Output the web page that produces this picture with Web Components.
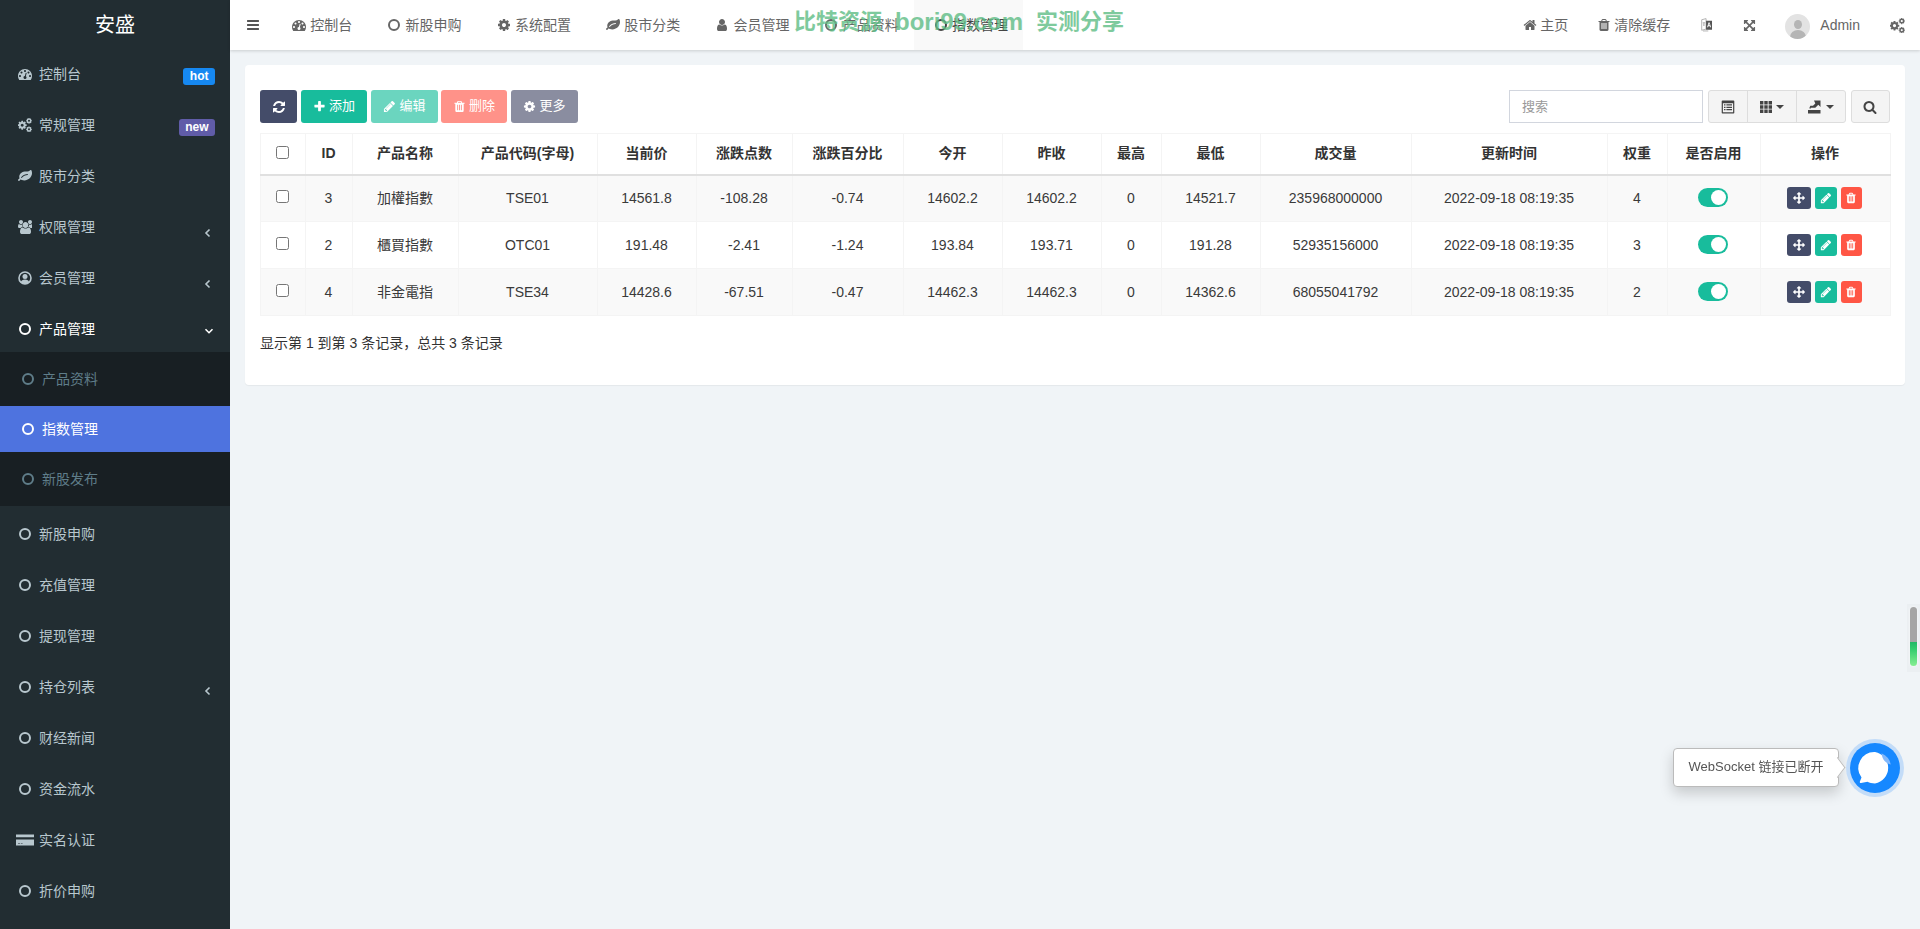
<!DOCTYPE html>
<html lang="zh-CN"><head><meta charset="utf-8"><title>安盛</title>
<style>
html,body{margin:0;height:100%;overflow:hidden;background:#f0f4f7;font:14px/1.42857 "Liberation Sans","Noto Sans CJK SC",sans-serif;color:#333}
body{display:flex}
main-col{flex:1;min-width:0}
</style></head><body>
<side-bar>
  <side-item icon="dashboard" badge="hot" badgecolor="#1688f1">控制台</side-item>
  <side-item icon="cogs" badge="new" badgecolor="#605ca8">常规管理</side-item>
  <side-item icon="leaf">股市分类</side-item>
  <side-item icon="users" arrow="left">权限管理</side-item>
  <side-item icon="usercircle" arrow="left">会员管理</side-item>
  <side-item icon="circle" arrow="down" kind="open">产品管理</side-item>
  <side-sub>
    <side-item icon="circle" kind="sub">产品资料</side-item>
    <side-item icon="circle" kind="cur">指数管理</side-item>
    <side-item icon="circle" kind="sub" style="height:53.6px">新股发布</side-item>
  </side-sub>
  <side-item icon="circle" kind="low">新股申购</side-item>
  <side-item icon="circle" kind="low">充值管理</side-item>
  <side-item icon="circle" kind="low">提现管理</side-item>
  <side-item icon="circle" kind="low" arrow="left">持仓列表</side-item>
  <side-item icon="circle" kind="low">财经新闻</side-item>
  <side-item icon="circle" kind="low">资金流水</side-item>
  <side-item icon="card" kind="low">实名认证</side-item>
  <side-item icon="circle" kind="low">折价申购</side-item>
</side-bar>
<main-col>
  <top-bar>
    <nav-tab icon="dashboard">控制台</nav-tab>
    <nav-tab icon="circle">新股申购</nav-tab>
    <nav-tab icon="cog">系统配置</nav-tab>
    <nav-tab icon="leaf">股市分类</nav-tab>
    <nav-tab icon="user">会员管理</nav-tab>
    <nav-tab icon="circle">产品资料</nav-tab>
    <nav-tab icon="circle" active>指数管理</nav-tab>
  </top-bar>
  <content-panel></content-panel>
</main-col>
<float-layer></float-layer>
<script>
const P={
bars:'M1664 1344v128q0 26-19 45t-45 19h-1408q-26 0-45-19t-19-45v-128q0-26 19-45t45-19h1408q26 0 45 19t19 45zm0-512v128q0 26-19 45t-45 19h-1408q-26 0-45-19t-19-45v-128q0-26 19-45t45-19h1408q26 0 45 19t19 45zm0-512v128q0 26-19 45t-45 19h-1408q-26 0-45-19t-19-45v-128q0-26 19-45t45-19h1408q26 0 45 19t19 45z',
plus:'M1600 736v192q0 40-28 68t-68 28h-416v416q0 40-28 68t-68 28h-192q-40 0-68-28t-28-68v-416h-416q-40 0-68-28t-28-68v-192q0-40 28-68t68-28h416v-416q0-40 28-68t68-28h192q40 0 68 28t28 68v416h416q40 0 68 28t28 68z',
pencil:'M491 1536l91-91-235-235-91 91v107h128v128h107zm523-928q0-22-22-22-10 0-17 7l-542 542q-7 7-7 17 0 22 22 22 10 0 17-7l542-542q7-7 7-17zm-54-192l416 416-832 832h-416v-416zm683 96q0 53-37 90l-166 166-416-416 166-165q36-38 90-38 53 0 91 38l235 234q37 39 37 91z',
trash:'M704 1376v-704q0-14-9-23t-23-9h-64q-14 0-23 9t-9 23v704q0 14 9 23t23 9h64q14 0 23-9t9-23zm256 0v-704q0-14-9-23t-23-9h-64q-14 0-23 9t-9 23v704q0 14 9 23t23 9h64q14 0 23-9t9-23zm256 0v-704q0-14-9-23t-23-9h-64q-14 0-23 9t-9 23v704q0 14 9 23t23 9h64q14 0 23-9t9-23zm-544-992h448l-48-117q-7-9-17-11h-317q-10 2-17 11zm928 32v64q0 14-9 23t-23 9h-96v948q0 83-47 143.5t-113 60.5h-832q-66 0-113-58.5t-47-141.5v-952h-96q-14 0-23-9t-9-23v-64q0-14 9-23t23-9h309l70-167q15-37 54-63t79-26h320q40 0 79 26t54 63l70 167h309q14 0 23 9t9 23z',
refresh:'M1639 1056q0 5-1 7-64 268-268 434.5t-478 166.5q-146 0-282.5-55t-243.5-157l-129 129q-19 19-45 19t-45-19-19-45v-448q0-26 19-45t45-19h448q26 0 45 19t19 45-19 45l-137 137q71 66 161 102t187 36q134 0 250-65t186-179q11-17 53-117 8-23 30-23h192q13 0 22.5 9.5t9.5 22.5zm25-800v448q0 26-19 45t-45 19h-448q-26 0-45-19t-19-45 19-45l138-138q-148-137-349-137-134 0-250 65t-186 179q-11 17-53 117-8 23-30 23h-199q-13 0-22.5-9.5t-9.5-22.5v-7q65-268 270-434.5t480-166.5q146 0 284 55.5t245 156.5l130-129q19-19 45-19t45 19 19 45z',
search:'M1216 832q0-185-131.5-316.5t-316.5-131.5-316.5 131.5-131.5 316.5 131.5 316.5 316.5 131.5 316.5-131.5 131.5-316.5zm512 832q0 52-38 90t-90 38q-54 0-90-38l-343-342q-179 124-399 124-143 0-273.5-55.5t-225-150-150-225-55.5-273.5 55.5-273.5 150-225 225-150 273.5-55.5 273.5 55.5 225 150 150 225 55.5 273.5q0 220-124 399l343 343q37 37 37 90z',
home:'M1472 992v480q0 26-19 45t-45 19h-384v-384h-256v384h-384q-26 0-45-19t-19-45v-480q0-1 .5-3t.5-3l575-474 575 474q1 2 1 6zm223-69l-62 74q-8 9-21 11h-3q-13 0-21-7l-692-577-692 577q-12 8-24 7-13-2-21-11l-62-74q-8-10-7-23.5t11-21.5l719-599q32-26 76-26t76 26l244 204v-195q0-14 9-23t23-9h192q14 0 23 9t9 23v408l219 182q10 8 11 21.5t-7 23.5z',
user:'M1536 1399q0 109-62.5 187t-150.5 78h-854q-88 0-150.5-78t-62.5-187q0-85 8.5-160.5t31.5-152 58.5-131 94-89 134.5-34.5q131 128 313 128t313-128q76 0 134.5 34.5t94 89 58.5 131 31.5 152 8.5 160.5zm-256-887q0 159-112.5 271.5t-271.5 112.5-271.5-112.5-112.5-271.5 112.5-271.5 271.5-112.5 271.5 112.5 112.5 271.5z',
cog:'M1152 896q0-106-75-181t-181-75-181 75-75 181 75 181 181 75 181-75 75-181zm512-109v222q0 12-8 23t-20 13l-185 28q-19 54-39 91 35 50 107 138 10 12 10 25t-9 23q-27 37-99 108t-94 71q-12 0-26-9l-138-108q-44 23-91 38-16 136-29 186-7 28-36 28h-222q-14 0-24.5-8.5t-11.5-21.5l-28-184q-49-16-90-37l-141 107q-10 9-25 9-14 0-25-11-126-114-165-168-7-10-7-23 0-12 8-23 15-21 51-66.5t54-70.5q-27-50-41-99l-183-27q-13-2-21-12.5t-8-23.5v-222q0-12 8-23t19-13l186-28q14-46 39-92-40-57-107-138-10-12-10-24 0-10 9-23 26-36 98.5-107.5t94.5-71.5q13 0 26 10l138 107q44-23 91-38 16-136 29-186 7-28 36-28h222q14 0 24.5 8.5t11.5 21.5l28 184q49 16 90 37l142-107q9-9 24-9 13 0 25 10 129 119 165 170 7 8 7 22 0 12-8 23-15 21-51 66.5t-54 70.5q26 50 41 98l183 28q13 2 21 12.5t8 23.5z',
leaf:'M1280 704q0-26-19-45t-45-19q-172 0-318 49.5t-259.5 134-235.5 219.5q-19 21-19 45 0 26 19 45t45 19q24 0 45-19 27-24 74-71t67-66q137-124 268.5-176t313.5-52q26 0 45-19t19-45zm512-198q0 95-20 193-46 224-184.5 383t-357.5 268q-214 108-438 108-148 0-286-47-15-5-88-42t-96-37q-16 0-39.5 32t-45 70-52.5 70-60 32q-43 0-63.5-17.5t-45.5-59.5q-2-4-6-11t-5.5-10-3-9.5-1.5-13.5q0-35 31-73.5t68-65.5 68-56 31-48q0-4-14-38t-16-44q-9-51-9-104 0-115 43.5-220t119-184.5 170.5-139 204-95.5q55-18 145-25.5t179.5-9 178.5-6 163.5-24 113.5-56.5l29.5-29.5 29.5-28 27-20 36.5-16 43.5-4.5q39 0 70.5 46t47.5 112 24 124 8 96z',
users:'M593 896q-162 5-265 128h-134q-82 0-138-40.5t-56-118.5q0-353 124-353 6 0 43.5 21t97.5 42.5 119 21.5q67 0 133-23-5 37-5 66 0 139 81 256zm1071 637q0 120-73 189.5t-194 69.5h-874q-121 0-194-69.5t-73-189.5q0-53 3.5-103.5t14-109 26.5-108.5 43-97.5 62-81 85.5-53.5 111.5-20q10 0 43 21.5t73 48 107 48 135 21.5 135-21.5 107-48 73-48 43-21.5q61 0 111.5 20t85.5 53.5 62 81 43 97.5 26.5 108.5 14 109 3.5 103.5zm-1024-1277q0 106-75 181t-181 75-181-75-75-181 75-181 181-75 181 75 75 181zm704 384q0 159-112.5 271.5t-271.5 112.5-271.5-112.5-112.5-271.5 112.5-271.5 271.5-112.5 271.5 112.5 112.5 271.5zm576 225q0 78-56 118.5t-138 40.5h-134q-103-123-265-128 81-117 81-256 0-29-5-66 66 23 133 23 59 0 119-21.5t97.5-42.5 43.5-21q124 0 124 353zm-128-609q0 106-75 181t-181 75-181-75-75-181 75-181 181-75 181 75 75 181z',
dashboard:'M384 1152q0-53-37.5-90.5t-90.5-37.5-90.5 37.5-37.5 90.5 37.5 90.5 90.5 37.5 90.5-37.5 37.5-90.5zm192-448q0-53-37.5-90.5t-90.5-37.5-90.5 37.5-37.5 90.5 37.5 90.5 90.5 37.5 90.5-37.5 37.5-90.5zm428 481l101-382q6-26-7.5-48.5t-38.5-29.5-48 6.5-30 39.5l-101 382q-60 5-107 43.5t-63 98.5q-20 77 20 146t117 89 146-20 89-117q16-60-6-117t-72-91zm660-33q0-53-37.5-90.5t-90.5-37.5-90.5 37.5-37.5 90.5 37.5 90.5 90.5 37.5 90.5-37.5 37.5-90.5zm-640-640q0-53-37.5-90.5t-90.5-37.5-90.5 37.5-37.5 90.5 37.5 90.5 90.5 37.5 90.5-37.5 37.5-90.5zm448 192q0-53-37.5-90.5t-90.5-37.5-90.5 37.5-37.5 90.5 37.5 90.5 90.5 37.5 90.5-37.5 37.5-90.5zm320 448q0 261-141 483-19 29-54 29h-1402q-35 0-54-29-141-221-141-483 0-182 71-348t191-286 286-191 348-71 348 71 286 191 191 286 71 348z',
arrows:'M1792 896q0 26-19 45l-256 256q-19 19-45 19t-45-19-19-45v-128h-384v384h128q26 0 45 19t19 45-19 45l-256 256q-19 19-45 19t-45-19l-256-256q-19-19-19-45t19-45 45-19h128v-384h-384v128q0 26-19 45t-45 19-45-19l-256-256q-19-19-19-45t19-45l256-256q19-19 45-19t45 19 19 45v128h384v-384h-128q-26 0-45-19t-19-45 19-45l256-256q19-19 45-19t45 19l256 256q19 19 19 45t-19 45-45 19h-128v384h384v-128q0-26 19-45t45-19 45 19l256 256q19 19 19 45z',
expand:'M1411 541l-355 355 355 355 144-144q29-31 70-14 39 17 39 59v448q0 26-19 45t-45 19h-448q-42 0-59-40-17-39 14-69l144-144-355-355-355 355 144 144q31 30 14 69-17 40-59 40h-448q-26 0-45-19t-19-45v-448q0-42 40-59 39-17 69 14l144 144 355-355-355-355-144 144q-19 19-45 19-12 0-24-5-40-17-40-59v-448q0-26 19-45t45-19h448q42 0 59 40 17 39-14 69l-144 144 355 355 355-355-144-144q-31-30-14-69 17-40 59-40h448q26 0 45 19t19 45v448q0 42-39 59-13 5-25 5-26 0-45-19z'
};
const cogD=P.cog;
const SVG={
circle:'<svg viewBox="0 0 14 14"><circle cx="7" cy="7" r="5" fill="none" stroke="currentColor" stroke-width="2"/></svg>',
usercircle:'<svg viewBox="0 0 14 14"><circle cx="7" cy="7" r="6" fill="none" stroke="currentColor" stroke-width="1.6"/><circle cx="7" cy="5.6" r="2.5" fill="currentColor"/><path d="M2.8 11.4c.4-2 2-2.9 4.2-2.9s3.8.9 4.2 2.9c-1 1-2.5 1.6-4.2 1.6s-3.2-.6-4.2-1.6z" fill="currentColor"/></svg>',
card:'<svg viewBox="0 0 18 14"><path fill="currentColor" d="M0 1.6h18v2.6H0zM0 6.6h18v5.8H0z"/><path fill="#222d32" d="M2 10h2.2v.6H2zM5 10h1.6v.6H5z"/></svg>',
cogs:`<svg viewBox="0 0 14 14"><g fill="currentColor"><path transform="translate(-1 2) scale(.0058)" d="${cogD}"/><path transform="translate(7.600 -.6) scale(.0038)" d="${cogD}"/><path transform="translate(7.600 7.900) scale(.0038)" d="${cogD}"/></g></svg>`,
th:'<svg viewBox="0 0 14 14"><path fill="currentColor" d="M1 1h3.400v3.400H1zM5.300 1h3.400v3.400H5.300zM9.600 1H13v3.400H9.600zM1 5.300h3.400v3.400H1zM5.300 5.300h3.400v3.400H5.300zM9.600 5.300H13v3.400H9.600zM1 9.600h3.400V13H1zM5.300 9.600h3.400V13H5.300zM9.600 9.600H13V13H9.600z"/></svg>',
list:'<svg viewBox="0 0 14 14"><path fill="currentColor" fill-rule="evenodd" d="M1.500.5h11q.8 0 .8.8v11.400q0 .8-.8.8h-11q-.8 0-.8-.8V1.300q0-.8.8-.8zM1.900 3.200v9.100h10.200V3.200zM3 4.300h1.500v1.200H3zM5.400 4.300h5.600v1.200H5.400zM3 6.700h1.500v1.200H3zM5.400 6.700h5.600v1.200H5.400zM3 9.100h1.500v1.200H3zM5.400 9.100h5.600v1.200H5.400z"/></svg>',
export:'<svg viewBox="0 0 14 14"><path fill="currentColor" d="M1 10h12.500v3.500H1z"/><path fill="currentColor" d="M7 .5h6.500V7l-2.200-2.200-3 3H3.800l-.3.900-1.200-.4 1-2.500h2.700l2.300-2.300z"/></svg>',
lang:'<svg viewBox="0 0 14 16"><path fill="none" stroke="#aaa" stroke-width="1" d="M1.500 2l5-1.300v12l-5 1.300zM3 14.800h6"/><path fill="#888" d="M2.700 5h2.800v.9H2.700zM3.600 6.200h.9v3h-.9z"/><path fill="#555" fill-rule="evenodd" d="M6.500 3h6.800v10.500H6.500zM9.300 5l-1.600 5.500h1.100l.3-1.200h1.700l.3 1.200h1.100L10.600 5zM9.400 8.300l.6-2.200.6 2.200z"/></svg>'
};
class FaIcon extends HTMLElement{
  connectedCallback(){
    if(this.shadowRoot)return;
    const n=this.getAttribute('name'),s=this.getAttribute('size')||14,w=this.getAttribute('w')||s;
    const inner=SVG[n]||`<svg viewBox="0 0 1792 1792"><path fill="currentColor" d="${P[n]}"/></svg>`;
    this.attachShadow({mode:'open'}).innerHTML=`<style>:host{display:inline-flex;width:${w}px;height:${s}px;flex:none}svg{width:100%;height:100%;display:block}</style>${inner}`;
  }
}
customElements.define('fa-icon',FaIcon);

class SideBar extends HTMLElement{
  constructor(){super();this.attachShadow({mode:'open'}).innerHTML=`<style>
  :host{display:block;width:230px;flex:none;height:100vh;background:#222d32;overflow:hidden}
  .logo{height:50px;display:flex;align-items:center;justify-content:center;color:#fff;font-size:20px}
  </style><div class="logo">安盛</div><slot></slot>`}
}
customElements.define('side-bar',SideBar);
class SideSub extends HTMLElement{
  constructor(){super();this.attachShadow({mode:'open'}).innerHTML=`<style>:host{display:block;background:#181f23;margin-bottom:3px}</style><slot></slot>`}
}
customElements.define('side-sub',SideSub);
class SideItem extends HTMLElement{
  connectedCallback(){
    if(this.shadowRoot)return;
    const ic=this.getAttribute('icon'),b=this.getAttribute('badge'),bc=this.getAttribute('badgecolor'),ar=this.getAttribute('arrow');
    const iconHtml=ic==='card'?`<fa-icon name="card" size="14" w="18"></fa-icon>`:`<fa-icon name="${ic}" size="14"></fa-icon>`;
    const arrow=ar?`<svg class="ar ${ar}" viewBox="0 0 10 10"><path d="${ar==='left'?'M6.500 1.500L3 5l3.500 3.500':'M1.500 3.200L5 6.700l3.500-3.500'}" fill="none" stroke="currentColor" stroke-width="1.600"/></svg>`:'';
    this.attachShadow({mode:'open'}).innerHTML=`<style>
    :host{display:flex;align-items:center;box-sizing:border-box;color:#b8c7ce;font-size:14px;position:relative;padding-left:18px;height:51px;padding-bottom:3px}
    :host([kind=open]){height:47px;padding-bottom:0;padding-top:1px;color:#fff}
    :host([kind=low]){padding-bottom:0}
    :host([kind=sub]){height:54px;padding:0 0 0 21px;color:#5f7d89}
    :host([kind=cur]){height:46px;padding:0 0 0 21px;color:#fff;background:#4e73df}
    :host([icon=card]){padding-left:16px}
    :host([icon=card]) .t{margin-left:5px}
    .t{margin-left:7px;white-space:nowrap;padding-top:2px}
    .b{margin-left:auto;margin-right:15px;margin-top:5px;height:17px;line-height:17px;padding:0 6.500px;border-radius:3px;color:#fff;font-size:12px;font-weight:700}
    .ar{position:absolute;right:17px;width:10px;height:10px;top:50%;margin-top:-1px}
    .ar.down{margin-top:-3px;right:16px}
    </style>${iconHtml}<span class="t"><slot></slot></span>${b?`<span class="b" style="background:${bc}">${b}</span>`:''}${arrow}`;
  }
}
customElements.define('side-item',SideItem);

class NavTab extends HTMLElement{
  connectedCallback(){
    if(this.shadowRoot)return;
    this.attachShadow({mode:'open'}).innerHTML=`<style>
    :host{display:flex;align-items:center;box-sizing:border-box;height:50px;padding:0 15px 0 20px;color:#666;flex:none}
    :host([active]){background:#f9f9f9;color:#444}
    .t{margin-left:4.300px;white-space:nowrap;padding-top:2px}
    </style><fa-icon name="${this.getAttribute('icon')}" size="14"></fa-icon><span class="t"><slot></slot></span>`;
  }
}
customElements.define('nav-tab',NavTab);
class TopBar extends HTMLElement{
  constructor(){super();this.attachShadow({mode:'open'}).innerHTML=`<style>
  :host{display:flex;height:50px;background:#fff;box-shadow:0 1px 3px rgba(0,0,0,.16);position:relative;color:#666}
  .tog{width:42px;display:flex;align-items:center;padding-left:16px;box-sizing:border-box;color:#555}
  .r{margin-left:auto;display:flex;align-items:center;height:50px}
  .i{display:flex;align-items:center;padding:0 15px;gap:3px;height:50px;white-space:nowrap}
  .i span.x{padding-top:2px}
  .av{width:25px;height:25px;border-radius:50%;background:#e3e3e3;position:relative;overflow:hidden;flex:none;margin-top:3px}
  .av:before{content:"";position:absolute;left:8.500px;top:6px;width:8px;height:9px;border-radius:50%;background:#b5b5b5}
  .av:after{content:"";position:absolute;left:4.500px;top:16px;width:16px;height:14px;border-radius:50%;background:#b5b5b5}
  .wm{position:absolute;left:564px;top:4px;display:flex;gap:13px;align-items:center;height:36px;font-size:22px;font-weight:700;color:#5fbd85;opacity:.8;white-space:pre;pointer-events:none}
  .wm b{font-size:24px}
  </style>
  <div class="tog"><fa-icon name="bars" size="14"></fa-icon></div><slot></slot>
  <div class="r">
    <div class="i"><fa-icon name="home" size="14"></fa-icon><span class="x">主页</span></div>
    <div class="i" style="padding-left:14px"><fa-icon name="trash" size="14"></fa-icon><span class="x">清除缓存</span></div>
    <div class="i"><fa-icon name="lang" size="14" w="13"></fa-icon></div>
    <div class="i"><fa-icon name="expand" size="13"></fa-icon></div>
    <div class="i" style="padding:0 15px 0 14px;gap:10px"><span class="av"></span><span class="x">Admin</span></div>
    <div class="i"><fa-icon name="cogs" size="15"></fa-icon></div>
  </div>
  <div class="wm"><span>比特资源</span><b>bori99.com</b><span>实测分享</span></div>`}
}
customElements.define('top-bar',TopBar);

class ToolBtn extends HTMLElement{
  connectedCallback(){
    if(this.shadowRoot)return;
    const c=this.getAttribute('color'),ic=this.getAttribute('icon'),s=this.getAttribute('isize')||13;
    this.attachShadow({mode:'open'}).innerHTML=`<style>
    :host{display:inline-flex;align-items:center;justify-content:center;box-sizing:border-box;height:33px;background:${c};color:#fff;border-radius:3px;font-size:13px;gap:3px;flex:none}
    </style><fa-icon name="${ic}" size="${s}"></fa-icon><slot></slot>`;
  }
}
customElements.define('tool-btn',ToolBtn);

const HEAD=['','ID','产品名称','产品代码(字母)','当前价','涨跌点数','涨跌百分比','今开','昨收','最高','最低','成交量','更新时间','权重','是否启用','操作'];
const W=[44.5,47,106,139,99,96,111,99,99,60,99,151,196,60,93,130];
const ROWS=[
['3','加權指數','TSE01','14561.8','-108.28','-0.74','14602.2','14602.2','0','14521.7','235968000000','2022-09-18 08:19:35','4'],
['2','櫃買指數','OTC01','191.48','-2.41','-1.24','193.84','193.71','0','191.28','52935156000','2022-09-18 08:19:35','3'],
['4','非金電指','TSE34','14428.6','-67.51','-0.47','14462.3','14462.3','0','14362.6','68055041792','2022-09-18 08:19:35','2']];
class DataTable extends HTMLElement{
  constructor(){super();
    const rows=ROWS.map(r=>`<tr><td class="c"><input type="checkbox"></td>${r.map(c=>`<td>${c}</td>`).join('')}<td class="c"><toggle-sw></toggle-sw></td><td class="c"><div class="ops"><span style="width:24px;background:#444c69"><fa-icon name="arrows" size="12"></fa-icon></span><span style="width:22px;background:#18bc9c"><fa-icon name="pencil" size="12"></fa-icon></span><span style="width:21px;background:#ff5645"><fa-icon name="trash" size="12"></fa-icon></span></div></td></tr>`).join('');
    this.attachShadow({mode:'open'}).innerHTML=`<style>
    :host{display:block;color:#3a3a3a}
    table{border-collapse:collapse;table-layout:fixed;width:1629.5px;font-size:14px;border:1px solid #f4f4f4}
    th,td{border:1px solid #f4f4f4;text-align:center;padding:0;box-sizing:border-box}
    th{height:41px;font-weight:700;border-bottom:2px solid #e0e0e0;color:#333}
    td{height:47px;padding-top:2px}
    td.c{padding-top:0}
    tbody tr:nth-child(odd){background:#f9f9f9}
    input{width:13px;height:13px;margin:0;vertical-align:middle;position:relative;top:-2px}
    .ops{display:flex;justify-content:center;gap:4px;margin-top:-1px;position:relative;left:-1px}
    .ops span{height:22px;display:flex;align-items:center;justify-content:center;border-radius:3px;color:#fff}
    </style><table><colgroup>${W.map(w=>`<col style="width:${w}px">`).join('')}</colgroup><thead><tr>${HEAD.map((h,i)=>`<th>${i?h:'<input type="checkbox">'}</th>`).join('')}</tr></thead><tbody>${rows}</tbody></table>`;
  }
}
customElements.define('data-table',DataTable);
class ToggleSw extends HTMLElement{
  constructor(){super();this.attachShadow({mode:'open'}).innerHTML=`<style>
  :host{display:inline-block;width:30px;height:19px;border-radius:10px;background:#18bc9c;position:relative;vertical-align:middle;margin-top:-2px;left:-1px}
  i{position:absolute;right:2px;top:2px;width:15px;height:15px;border-radius:50%;background:#fff}
  </style><i></i>`}
}
customElements.define('toggle-sw',ToggleSw);

class ContentPanel extends HTMLElement{
  constructor(){super();this.attachShadow({mode:'open'}).innerHTML=`<style>
  :host{display:block;box-sizing:border-box;margin:15px 15.500px 0 15px;height:320px;background:#fff;border-radius:4px;padding:25px 15px 0;box-shadow:0 1px 1px rgba(0,0,0,.05)}
  .bar{display:flex;height:33px;margin-bottom:10px;width:1629.5px}
  .l{display:flex;gap:4px}
  .r{margin-left:auto;display:flex}
  input{box-sizing:border-box;width:193.500px;height:33px;border:1px solid #d2d6de;padding:0 12px;font:13px "Liberation Sans","Noto Sans CJK SC",sans-serif;outline:0;border-radius:0;margin-right:5.500px}
  input::placeholder{color:#999}
  .g{display:flex;height:33px;box-sizing:border-box;border:1px solid #ddd;border-radius:3px;background:#f4f4f4;color:#444}
  .g>div{display:flex;align-items:center;justify-content:center;gap:3px;height:31px;box-sizing:border-box}
  .g>div+div{border-left:1px solid #ddd}
  .caret{width:0;height:0;border:4px solid transparent;border-top-color:#444;border-bottom:0}
  .sum{margin-top:17px;line-height:20px;height:20px;color:#333}
  </style>
  <div class="bar"><div class="l">
    <tool-btn color="#444c69" icon="refresh" isize="14" style="width:37px"></tool-btn>
    <tool-btn color="#18bc9c" icon="plus" style="width:66px">添加</tool-btn>
    <tool-btn color="#6bd5bf" icon="pencil" style="width:67px">编辑</tool-btn>
    <tool-btn color="#ff9289" icon="trash" style="width:66px;margin-left:-1px">删除</tool-btn>
    <tool-btn color="#8a8da0" icon="cog" style="width:67px">更多</tool-btn>
  </div><div class="r">
    <input placeholder="搜索">
    <div class="g"><div style="width:37.500px"><fa-icon name="list" size="14"></fa-icon></div><div style="width:49px"><fa-icon name="th" size="14"></fa-icon><span class="caret"></span></div><div style="width:49px;gap:5px"><fa-icon name="export" size="14"></fa-icon><span class="caret"></span></div></div>
    <div class="g" style="margin-left:5px"><div style="width:37px"><fa-icon name="search" size="14"></fa-icon></div></div>
  </div></div>
  <data-table></data-table>
  <div class="sum">显示第 1 到第 3 条记录，总共 3 条记录</div>`}
}
customElements.define('content-panel',ContentPanel);

class FloatLayer extends HTMLElement{
  constructor(){super();this.attachShadow({mode:'open'}).innerHTML=`<style>
  :host{position:fixed;inset:0;pointer-events:none;display:block}
  .scroll{position:absolute;left:1907px;top:604px;width:13px;height:68px;background:rgba(0,0,0,.02)}
  .scroll i{position:absolute;left:3px;top:3px;width:7px;height:59px;border-radius:4px;background:linear-gradient(#a5a5a5 0 35px,#22b866 35px,#33cc6e 42px,#86ee92 59px);box-shadow:0 0 2px #fff}
  .tip{position:absolute;left:1673px;top:748px;width:166px;height:39px;box-sizing:border-box;background:#fff;border:1px solid #bbb;border-radius:4px;font-size:13px;color:#555;display:flex;align-items:center;justify-content:center;box-shadow:0 6px 14px rgba(0,0,0,.18)}
  .tip:after{content:"";position:absolute;right:-6px;top:12px;width:12px;height:12px;background:#fff;border:1px solid #bbb;border-width:1px 1px 0 0;transform:rotate(45deg) skew(8deg,8deg)}
  .chat{position:absolute;left:1846px;top:738.500px;width:58px;height:58px;border-radius:50%;background:#c3dcf8;display:flex;align-items:center;justify-content:center}
  .chat svg{width:50px;height:50px;display:block}
  </style>
  <div class="scroll"><i></i></div>
  <div class="tip">WebSocket 链接已断开</div>
  <div class="chat"><svg viewBox="0 0 50 50"><circle cx="25" cy="25" r="25" fill="#1688ff"/><path fill="#fff" d="M25 9a16 16 0 0 1 0 31.500c-3 0-5.500-.7-7.500-1.700L11 40c-1 .1-1.500-.7-1.100-1.500l1.600-4A16 16 0 0 1 25 9z"/><path fill="#82b8fb" d="M31.500 10.300A16 16 0 0 1 40.800 21.500c-4.500-.5-8.800-5-9.300-11.200z"/></svg></div>`}
}
customElements.define('float-layer',FloatLayer);
</script>
</body></html>
